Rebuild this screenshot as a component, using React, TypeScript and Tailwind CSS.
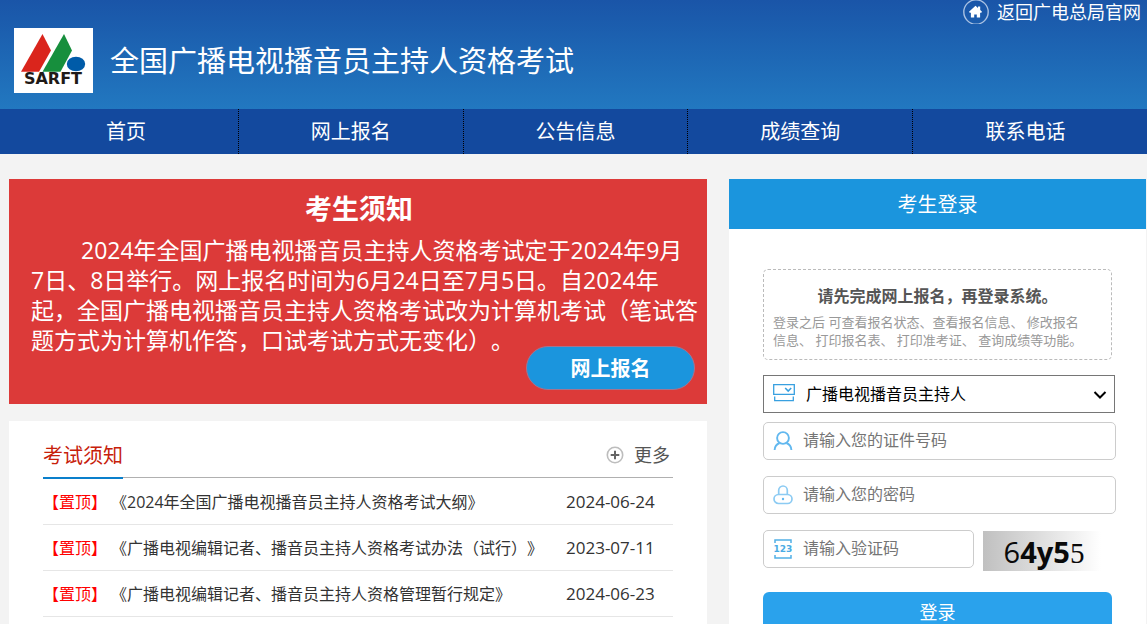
import { useState } from "react"

const navItems = ["首页", "网上报名", "公告信息", "成绩查询", "联系电话"]

const notices = [
  { title: "《2024年全国广播电视播音员主持人资格考试大纲》", date: "2024-06-24" },
  { title: "《广播电视编辑记者、播音员主持人资格考试办法（试行）》", date: "2023-07-11" },
  { title: "《广播电视编辑记者、播音员主持人资格管理暂行规定》", date: "2024-06-23" },
]

const Logo = () => (
  <svg viewBox="0 0 79 65" className="h-[65px] w-[79px] shrink-0 bg-white" role="img" aria-label="SARFT">
    <path d="M28.5 6 37 22.5 25 43.7H7Z" fill="#da251c" />
    <path d="M50 6 58 22.5 46.5 43.7H28.5Z" fill="#178f3d" />
    <ellipse cx="62" cy="36" rx="9.2" ry="7.3" fill="#005ba8" />
    <text x="39" y="56" textAnchor="middle" fontSize="16" fontWeight="700" fill="#1f1a17" fontFamily="'DejaVu Sans', sans-serif">
      SARFT
    </text>
  </svg>
)

const HomeIcon = () => (
  <svg viewBox="0 0 26 24" className="h-6 w-[26px]" fill="none" aria-hidden="true">
    <circle cx="13" cy="12" r="12.2" stroke="#a9c1e2" strokeWidth="1.4" />
    <path d="M12.500 5.800 15 8V6.600h2.200V10L19 11.800l-.7.900h-1.200V17.600h-3.300v-3.200h-2.600v3.200H7.900v-4.900H6.700L6 11.800Z" fill="#fff" />
  </svg>
)

const PlusIcon = () => (
  <svg viewBox="0 0 18 18" className="h-[18px] w-[18px]" fill="none" aria-hidden="true">
    <circle cx="9" cy="9" r="7.7" stroke="#bdbdbd" strokeWidth="1.6" />
    <path d="M9 4.700v8.600M4.700 9h8.600" stroke="#666" strokeWidth="2" />
  </svg>
)

const SelectIcon = () => (
  <svg viewBox="0 0 22 18" className="h-[18px] w-[22px]" fill="none" stroke="#38a0e0" aria-hidden="true">
    <path d="M.7.700h20.600v9.600H.7Z" strokeWidth="1.300" />
    <path d="m12.200 4 3 3 3-3" strokeWidth="1.600" />
    <path d="M1.700 12.500v4.200h18.600v-4.200" strokeWidth="1.300" />
  </svg>
)

const UserIcon = () => (
  <svg viewBox="0 0 20 20" className="h-5 w-5" fill="none" stroke="#62b8ef" strokeWidth="1.900" aria-hidden="true">
    <circle cx="10" cy="7" r="5.900" />
    <path d="M1.600 19c.2-3.400 2.200-5.900 5-7M18.400 19c-.2-3.400-2.200-5.900-5-7" />
  </svg>
)

const LockIcon = () => (
  <svg viewBox="0 0 20 20" className="h-5 w-5" fill="none" stroke="#8ccbf3" strokeWidth="1.700" aria-hidden="true">
    <path d="M5.700 9.500V5.300a4.300 4.300 0 0 1 8.600 0v4.200" />
    <rect x="1" y="9.500" width="18" height="9" rx="4.500" />
    <circle cx="10" cy="14" r="1.200" fill="#62b8ef" stroke="none" />
  </svg>
)

const CodeIcon = () => (
  <svg viewBox="0 0 20 20" className="h-5 w-5" fill="none" aria-hidden="true">
    <path d="M2 4V1h16v3M2 16v3h16v-3" stroke="#52b0e6" strokeWidth="1.500" />
    <text x="10" y="13" textAnchor="middle" fontSize="9" fontWeight="700" fill="#4aabe4" fontFamily="'DejaVu Sans', sans-serif">
      123
    </text>
  </svg>
)

const fieldClass =
  "flex h-[38px] items-center gap-[10px] rounded-[5px] border border-[#ccc] bg-white pl-[9px]"
const inputClass =
  "h-full min-w-0 flex-1 bg-transparent pb-[2px] text-base text-black outline-none placeholder:text-[#757575]"

const Header = () => (
  <header className="bg-linear-to-b from-[#1a55a8] to-[#2278c0]">
    <div className="flex h-6 items-start justify-end pr-[6px]">
      <a href="#" className="flex items-center gap-2 text-lg leading-6 text-white">
        <HomeIcon />
        返回广电总局官网
      </a>
    </div>
    <div className="flex items-center gap-[17px] pt-1 pb-4 pl-[14px]">
      <Logo />
      <h1 className="text-[29px] leading-10 text-white">全国广播电视播音员主持人资格考试</h1>
    </div>
  </header>
)

const Nav = () => (
  <nav className="bg-[#13499e] pr-[9px] pl-[14px]">
    <ul className="grid grid-cols-5">
      {navItems.map((item) => (
        <li key={item} className="border-r border-dotted border-black last:border-r-0">
          <a href="#" className="block text-center text-xl leading-[45px] text-white">
            {item}
          </a>
        </li>
      ))}
    </ul>
  </nav>
)

const Announcement = () => (
  <section className="flex flex-col bg-[#dc3a39] pt-[10px] pr-2 pb-[14px] pl-[22px] text-white">
    <h2 className="pr-3 text-center text-[27px] leading-10 font-bold">考生须知</h2>
    <p className="mt-[6px] indent-[50px] text-[23px] leading-[30px]">
      2024年全国广播电视播音员主持人资格考试定于2024年9月
      <br />
      7日、8日举行。网上报名时间为6月24日至7月5日。自2024年
      <br />
      起，全国广播电视播音员主持人资格考试改为计算机考试（笔试答
      <br />
      题方式为计算机作答，口试考试方式无变化）。
    </p>
    <button
      type="button"
      className="-mt-[9px] mr-1 h-11 w-[169px] self-end rounded-full border border-[#a5738f] bg-[#1b95dd] pt-[2px] text-xl font-bold"
    >
      网上报名
    </button>
  </section>
)

const NoticeList = () => (
  <section className="flex-1 bg-white px-[34px] pt-3">
    <div className="box-content flex h-11 items-center justify-between border-b border-[#b0b0b0]">
      <h2 className="-mb-[2px] self-start border-b-2 border-[#0a7fcb] pt-[2px] text-xl leading-[42px] text-[#c7200a]">
        考试须知
      </h2>
      <a href="#" className="flex items-center gap-[10px] pr-[3px] text-lg leading-6 text-[#555]">
        <PlusIcon />
        更多
      </a>
    </div>
    <ul className="pt-px">
      {notices.map((notice) => (
        <li key={notice.title} className="flex h-[46px] items-center border-b border-[#e6e6e6] pt-px">
          <a href="#" className="flex flex-1 gap-1 text-base whitespace-nowrap text-[#333]">
            <span className="text-[#f00]">【置顶】</span>
            {notice.title}
          </a>
          <time className="w-[107px] text-[17px] text-[#333]">{notice.date}</time>
        </li>
      ))}
    </ul>
  </section>
)

const LoginPanel = () => {
  const [idNumber, setIdNumber] = useState("")
  const [password, setPassword] = useState("")
  const [code, setCode] = useState("")

  return (
    <section className="bg-white">
      <h2 className="bg-[#1b95dd] pt-[2px] text-center text-xl leading-[48px] text-white">考生登录</h2>
      <form className="px-[34px] pt-10" onSubmit={(e) => e.preventDefault()}>
        <div className="rounded-[5px] border border-dashed border-[#bbb] px-[9px] pt-[14px] pb-[10px]">
          <p className="text-center text-base leading-6 font-bold text-[#555]">请先完成网上报名，再登录系统。</p>
          <p className="mt-[5px] text-[13px] leading-[18px] whitespace-nowrap text-[#999]">
            登录之后 可查看报名状态、查看报名信息、 修改报名
            <br />
            信息、 打印报名表、 打印准考证、 查询成绩等功能。
          </p>
        </div>

        <div className="relative mt-[15px] -mr-[3px]">
          <select
            aria-label="考试类型"
            className="block h-[38px] w-full appearance-none border border-[#767676] bg-white pl-[42px] text-base text-black"
          >
            <option>广播电视播音员主持人</option>
            <option>广播电视编辑记者</option>
          </select>
          <span className="pointer-events-none absolute top-[9px] left-[10px]">
            <SelectIcon />
          </span>
          <svg viewBox="0 0 14 8" className="pointer-events-none absolute top-4 right-2 h-2 w-[14px]" fill="none" stroke="#000" strokeWidth="2" aria-hidden="true">
            <path d="m1.500 1 5.500 5.500L12.500 1" />
          </svg>
        </div>

        <label className={`${fieldClass} mt-[9px] -mr-1`}>
          <UserIcon />
          <input
            type="text"
            aria-label="证件号码"
            className={inputClass}
            placeholder="请输入您的证件号码"
            value={idNumber}
            onChange={(e) => setIdNumber(e.target.value)}
          />
        </label>

        <label className={`${fieldClass} mt-4 -mr-1`}>
          <LockIcon />
          <input
            type="password"
            aria-label="密码"
            className={inputClass}
            placeholder="请输入您的密码"
            value={password}
            onChange={(e) => setPassword(e.target.value)}
          />
        </label>

        <div className="mt-4 flex gap-[9px] pr-[11px]">
          <label className={`${fieldClass} min-w-0 flex-1`}>
            <CodeIcon />
            <input
              type="text"
              aria-label="验证码"
              className={inputClass}
              placeholder="请输入验证码"
              value={code}
              onChange={(e) => setCode(e.target.value)}
            />
          </label>
          <button
            type="button"
            aria-label="换一张验证码"
            className="mt-px h-10 w-[118px] shrink-0 bg-linear-to-r from-[#c0c0c0] to-white"
          >
            <svg viewBox="0 0 118 40" className="h-10 w-[118px]" fill="#0a0a0a">
              <text x="61" y="32" textAnchor="middle" fontSize="29" fontFamily="'Open Sans', sans-serif">
                6<tspan fontWeight="700">4y5</tspan>
                <tspan fontFamily="'Liberation Serif', serif">5</tspan>
              </text>
            </svg>
          </button>
        </div>

        <button type="submit" className="mt-[21px] h-10 w-full rounded-md bg-[#2aa2ec] text-lg text-white">
          登录
        </button>
      </form>
    </section>
  )
}

const App = () => {
  return (
    <div className="flex h-screen flex-col overflow-hidden bg-[#f3f3f3] font-['Open_Sans','Noto_Sans_CJK_SC',sans-serif] [text-spacing-trim:space-all]">
      <Header />
      <Nav />
      <main className="grid flex-1 grid-cols-[minmax(0,698fr)_minmax(0,417fr)] gap-[22px] pt-[25px] pr-px pl-[9px]">
        <div className="flex flex-col gap-[17px]">
          <Announcement />
          <NoticeList />
        </div>
        <LoginPanel />
      </main>
    </div>
  )
}

export default App
